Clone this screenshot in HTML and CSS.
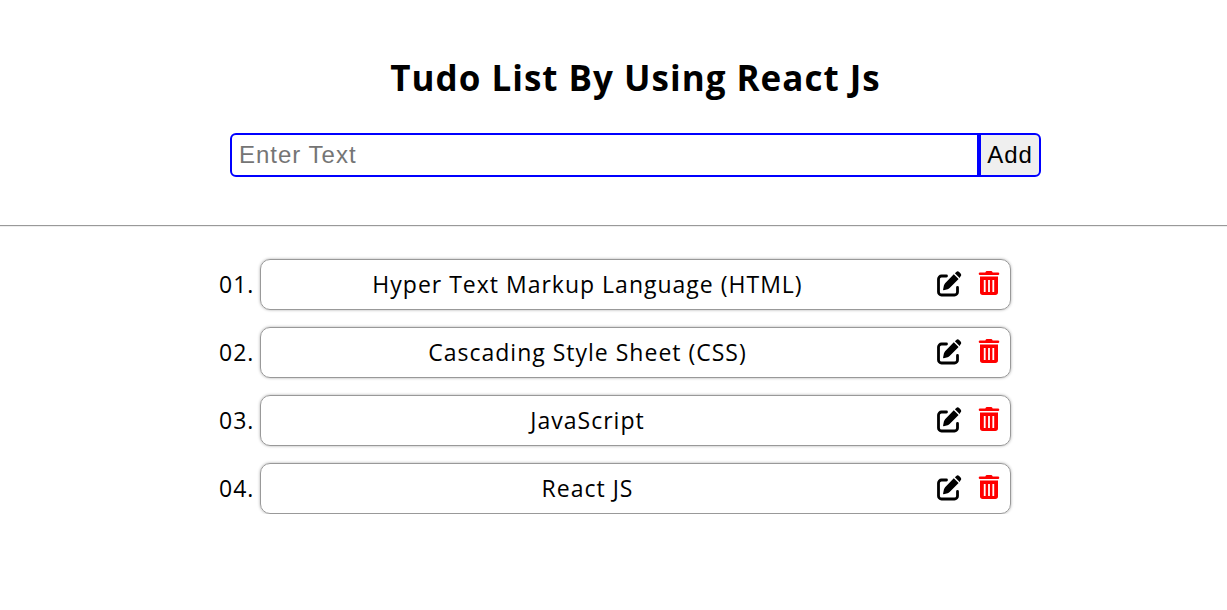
FILE: index.html
```html
<!DOCTYPE html>
<html lang="en">
<head>
<meta charset="utf-8">
<meta name="viewport" content="width=device-width, initial-scale=1">
<title>Tudo List</title>
<link rel="stylesheet" href="styles.css">
</head>
<body>
<svg class="symbols" aria-hidden="true">
  <symbol id="edit" viewBox="0 0 26 26"><path d="M10.500 5H5.500a3 3 0 0 0-3 3v13a3 3 0 0 0 3 3h13a3 3 0 0 0 3-3V16.500" fill="none" stroke="currentColor" stroke-width="2.800" stroke-linecap="round"/><path d="M17.800 3.300 22.600 8.100 13.600 17.100Q12.700 17.900 11.600 18.300L7.700 19.200Q6.900 19.300 7.100 18.500L7.900 14.600Q8.200 13.500 9.100 12.200ZM18.900 2.200 20.300.9Q21.700-.3 23.100.9L24.600 2.500Q25.800 3.900 24.600 5.300L23.600 6.900Z"/></symbol>
  <symbol id="trash" viewBox="0 0 26 26"><path fill-rule="evenodd" d="M9.700.7Q10 0 10.800 0H15.200Q16 0 16.300.7L16.700 1.500H22Q23.300 1.500 23.300 2.700 23.300 4 22 4H4Q2.700 4 2.700 2.700 2.700 1.500 4 1.500H9.300ZM4 5.500H22V21.300Q22 24 19.300 24H6.700Q4 24 4 21.300ZM7.800 9V21H9.600V9ZM12.100 9V21H13.900V9ZM16.400 9V21H18.200V9Z"/></symbol>
</svg>
<main class="page">
  <header class="top">
    <h1 class="title">Tudo List By Using React Js</h1>
    <form class="entry">
      <input class="entry-text" type="text" placeholder="Enter Text" aria-label="Enter Text">
      <button class="entry-add" type="button">Add</button>
    </form>
  </header>
  <hr class="rule">
  <ol class="list">
    <li class="item"><span class="number">01.</span><div class="card"><span class="name">Hyper Text Markup Language (HTML)</span><button class="icon" type="button" aria-label="Edit"><svg><use href="#edit"/></svg></button><button class="icon delete" type="button" aria-label="Delete"><svg><use href="#trash"/></svg></button></div></li>
    <li class="item"><span class="number">02.</span><div class="card"><span class="name">Cascading Style Sheet (CSS)</span><button class="icon" type="button" aria-label="Edit"><svg><use href="#edit"/></svg></button><button class="icon delete" type="button" aria-label="Delete"><svg><use href="#trash"/></svg></button></div></li>
    <li class="item"><span class="number">03.</span><div class="card"><span class="name">JavaScript</span><button class="icon" type="button" aria-label="Edit"><svg><use href="#edit"/></svg></button><button class="icon delete" type="button" aria-label="Delete"><svg><use href="#trash"/></svg></button></div></li>
    <li class="item"><span class="number">04.</span><div class="card"><span class="name">React JS</span><button class="icon" type="button" aria-label="Edit"><svg><use href="#edit"/></svg></button><button class="icon delete" type="button" aria-label="Delete"><svg><use href="#trash"/></svg></button></div></li>
  </ol>
</main>
</body>
</html>
```
FILE: styles.css
```css
* { box-sizing: border-box; }
body { margin: 0; background: #fff; color: #000; font-family: "Segoe UI", "Open Sans", "Noto Sans", sans-serif; letter-spacing: 1px; }
.symbols { display: none; }
.top { padding: 54px 186px 48px 230px; }
.title { margin: 0 0 31px; font-size: 35px; line-height: 48px; text-align: center; }
.entry { display: flex; }
.entry-text, .entry-add { height: 44px; border: 2px solid #00f; font: 24px "Liberation Sans", Arial, sans-serif; letter-spacing: 1px; }
.entry-text { flex: 1; min-width: 0; padding: 0 7px; border-radius: 6px 0 0 6px; }
.entry-text::placeholder { color: #757575; }
.entry-add { width: 62px; padding: 0; border-radius: 0 6px 6px 0; background: #efefef; color: #000; }
.rule { margin: 0; border: 0; border-top: 1px solid #999; border-bottom: 1px solid #eee; }
.list { list-style: none; margin: 0; padding: 32px 216px 0 219px; display: grid; gap: 17px; }
.item { display: flex; align-items: center; font-size: 23px; line-height: 32px; }
.number { width: 41px; padding-bottom: 2px; }
.card { flex: 1; min-width: 0; height: 51px; display: flex; align-items: center; padding: 0 8px; border: 1px solid #999; border-radius: 10px; box-shadow: 0 0 3px #aaa; }
.name { flex: 1; padding: 0 30px 2px 0; text-align: center; }
.icon { display: flex; width: 26px; height: 28px; padding: 0; border: 0; background: none; color: #000; }
.icon svg { width: 26px; height: 26px; fill: currentColor; }
.delete { margin-left: 14px; color: #f00; }
```
